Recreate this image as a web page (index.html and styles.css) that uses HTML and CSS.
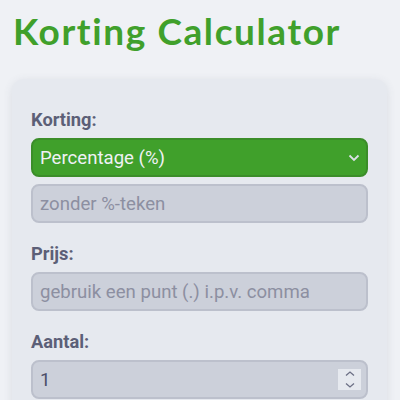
FILE: index.html
```html
<!DOCTYPE html>
<html lang="nl">
<head>
<meta charset="utf-8">
<title>Korting Calculator</title>
<link rel="stylesheet" href="styles.css">
</head>
<body>
<h1 class="title">Korting Calculator</h1>
<form class="card">
  <div class="group">
    <label class="label" for="type">Korting:</label>
    <div class="select-wrap">
      <select id="type" class="select">
        <option>Percentage (%)</option>
        <option>Bedrag (€)</option>
      </select>
      <svg class="chev" width="12" height="8" viewBox="0 0 12 8"><path d="M1.5 1.5 L6 6 L10.5 1.5" fill="none" stroke="#dce0e8" stroke-width="1.8"/></svg>
    </div>
    <input class="input" type="text" placeholder="zonder %-teken">
  </div>
  <div class="group">
    <label class="label" for="prijs">Prijs:</label>
    <input id="prijs" class="input" type="text" placeholder="gebruik een punt (.) i.p.v. comma">
  </div>
  <div class="group">
    <label class="label" for="aantal">Aantal:</label>
    <div class="num-wrap">
      <input id="aantal" class="input" type="text" value="1">
      <span class="spin">
        <svg width="14" height="9" viewBox="0 0 14 9"><path d="M3 6.5 L7 3 L11 6.5" fill="none" stroke="#6c6f85" stroke-width="1.3"/></svg>
        <svg width="14" height="9" viewBox="0 0 14 9"><path d="M3 2.5 L7 6 L11 2.5" fill="none" stroke="#6c6f85" stroke-width="1.3"/></svg>
      </span>
    </div>
  </div>
</form>
</body>
</html>
```
FILE: styles.css
```css
html, body {
  margin: 0;
  padding: 0;
  background: #eff1f5;
}
body {
  padding: 0 13px 0 12px;
  font-family: Roboto, "Liberation Sans", sans-serif;
}
.title {
  margin: 0;
  padding: 9px 0 0 1px;
  font-family: Lato, "Open Sans", sans-serif;
  font-weight: 700;
  font-size: 37px;
  line-height: 44px;
  letter-spacing: 1.6px;
  color: #40a02b;
}
.card {
  margin-top: 26px;
  background: #e6e9ef;
  border-radius: 12px;
  box-shadow: 0 2px 10px rgba(76, 79, 105, 0.12);
  padding: 30px 19px 20px;
  display: flex;
  flex-direction: column;
  gap: 20px;
}
.group {
  display: flex;
  flex-direction: column;
  gap: 7px;
}
.label {
  font-weight: 700;
  font-size: 18.3px;
  line-height: 22px;
  color: #5c5f77;
}
.select-wrap, .num-wrap {
  position: relative;
}
.select {
  appearance: none;
  -webkit-appearance: none;
  width: 100%;
  box-sizing: border-box;
  height: 39px;
  padding: 0 30px 0 7px;
  border: 2px solid #3b8d29;
  border-radius: 8px;
  background: #40a02b;
  color: #eff1f5;
  font-family: Roboto, sans-serif;
  font-size: 18.6px;
  outline: none;
}
.chev {
  position: absolute;
  right: 8px;
  top: 16px;
  pointer-events: none;
}
.input {
  width: 100%;
  box-sizing: border-box;
  height: 39px;
  padding: 0 7px;
  border: 2px solid #bcc0cc;
  border-radius: 8px;
  background: #ccd0da;
  color: #4c4f69;
  font-family: Roboto, sans-serif;
  font-size: 18.6px;
  outline: none;
}
.input::placeholder {
  color: #8c8fa1;
}
.spin {
  position: absolute;
  right: 7px;
  top: 9px;
  width: 23px;
  height: 21px;
  background: #e6e9ef;
  display: flex;
  flex-direction: column;
  align-items: center;
  justify-content: space-between;
}
.spin svg {
  display: block;
}
```
